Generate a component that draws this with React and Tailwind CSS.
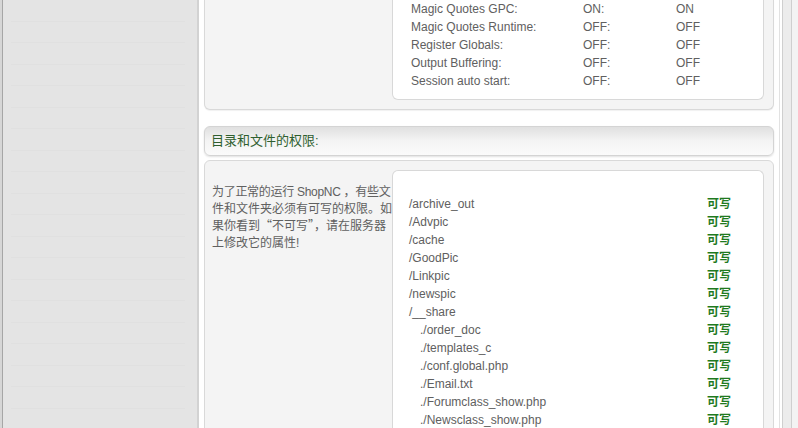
import React from "react";

const settings = [
  { label: "Magic Quotes GPC:", need: "ON:", now: "ON" },
  { label: "Magic Quotes Runtime:", need: "OFF:", now: "OFF" },
  { label: "Register Globals:", need: "OFF:", now: "OFF" },
  { label: "Output Buffering:", need: "OFF:", now: "OFF" },
  { label: "Session auto start:", need: "OFF:", now: "OFF" },
];

const files = [
  { path: "/archive_out" },
  { path: "/Advpic" },
  { path: "/cache" },
  { path: "/GoodPic" },
  { path: "/Linkpic" },
  { path: "/newspic" },
  { path: "/__share" },
  { path: "./order_doc", sub: true },
  { path: "./templates_c", sub: true },
  { path: "./conf.global.php", sub: true },
  { path: "./Email.txt", sub: true },
  { path: "./Forumclass_show.php", sub: true },
  { path: "./Newsclass_show.php", sub: true },
];

const font = "font-['Liberation_Sans','Noto_Sans_CJK_SC',sans-serif]";
const cjk = "font-['Noto_Sans_CJK_SC',sans-serif]";

export default function App() {
  return (
    <div className={`flex w-[798px] h-[428px] overflow-hidden bg-white ${font}`}>
      {/* left edge */}
      <div className="w-[3px] bg-[#d6d6d6] border-r border-[#a6a6a6]" />

      {/* sidebar */}
      <div className="w-[196px] bg-[#e4e4e4] border-r-2 border-[#d2d2d2] flex flex-col pl-[8px] pr-[12px]">
        {Array.from({ length: 20 }).map((_, i) => (
          <div key={i} className="h-[21.5px] shrink-0 border-b border-[#e0e0e0]" />
        ))}
      </div>

      {/* main */}
      <div className="w-[580px] px-[5px] flex flex-col">
        {/* environment panel */}
        <div className="shrink-0 bg-[#f4f4f4] border border-t-0 border-[#d9d9d9] rounded-b-[6px] pl-[187px] pr-[9px] pb-[9px] shadow-[0_1px_1px_rgba(0,0,0,0.06)]">
          <div className="bg-white border border-t-0 border-[#d8d8d8] rounded-b-[6px] pl-[18px] pb-[9px] text-[12px] text-[#606060]">
            {settings.map((s) => (
              <div key={s.label} className="flex h-[18px] items-center">
                <span className="w-[172px]">{s.label}</span>
                <span className="w-[93px]">{s.need}</span>
                <span>{s.now}</span>
              </div>
            ))}
          </div>
        </div>

        {/* header */}
        <div className="shrink-0 mt-[16px] h-[30px] flex items-center pl-[6px] rounded-[6px] border border-[#d4d4d4] bg-gradient-to-b from-[#e0e0e0] via-[#f4f4f4] to-[#fbfbfb] shadow-[0_1px_2px_rgba(0,0,0,0.12)] text-[13px] text-[#2f5f2f]">
          目录和文件的权限:
        </div>

        {/* permissions panel */}
        <div className="shrink-0 mt-[4px] flex bg-[#f4f4f4] border border-[#d9d9d9] rounded-t-[6px] pt-[9px] pr-[9px] h-[300px]">
          <div className="w-[187px] pl-[7px] pt-[14px] text-[12px] leading-[16.5px] text-[#606060]">
            <div className="whitespace-nowrap tracking-[-0.3px]">为了正常的运行 ShopNC ，有些文</div>
            <div className="whitespace-nowrap">件和文件夹必须有可写的权限。如</div>
            <div className="whitespace-nowrap">
              果你看到<span className={cjk}>“</span>不可写<span className={cjk}>”</span>，请在服务器
            </div>
            <div className="whitespace-nowrap">上修改它的属性!</div>
          </div>
          <div className="flex-1 bg-white border border-b-0 border-[#d8d8d8] rounded-t-[6px] pl-[16px] pt-[24px] text-[12px] text-[#606060]">
            {files.map((f) => (
              <div key={f.path} className="flex h-[18px] items-center">
                <span className={`w-[298px] ${f.sub ? "pl-[11px]" : ""}`}>{f.path}</span>
                <span className="font-bold text-[#1f7a1f]">可写</span>
              </div>
            ))}
          </div>
        </div>
      </div>

      {/* right frame edge */}
      <div className="flex-1 flex">
        <div className="w-[3px] border-l border-[#e2e2e2] bg-white" />
        <div className="w-[10px] bg-[#ececec] border-l border-[#cfcfcf] border-r border-[#b6b6b6]" />
        <div className="flex-1 bg-[#f3f3f3]" />
      </div>
    </div>
  );
}
